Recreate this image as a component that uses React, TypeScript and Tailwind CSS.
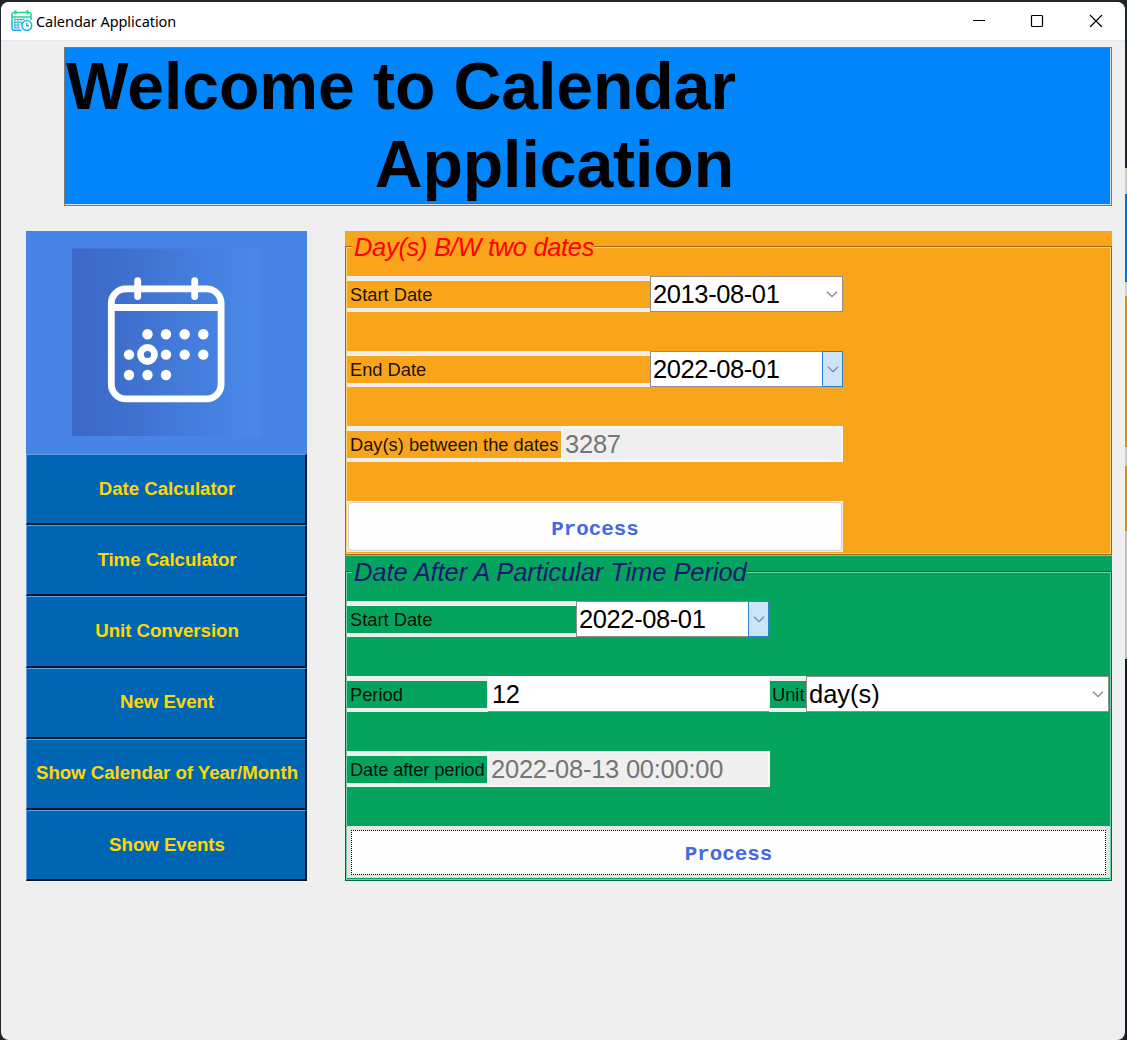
import React from "react";

const ARIAL = "font-['Liberation_Sans',Arial,sans-serif]";

function AppIcon() {
  return (
    <svg width="22" height="22" viewBox="0 0 22 22" fill="none">
      <defs>
        <linearGradient id="appIcon" x1="0" y1="0" x2="0" y2="22" gradientUnits="userSpaceOnUse">
          <stop offset="0" stopColor="#22e08a" />
          <stop offset="1" stopColor="#1f9bff" />
        </linearGradient>
      </defs>
      <g stroke="url(#appIcon)" strokeWidth="1.5">
        <path d="M10.5 20.300H3a2 2 0 0 1-2-2V4a1.500 1.500 0 0 1 1.500-1.500h16A1.500 1.500 0 0 1 20 4v6" />
        <path d="M1 6.900h19" />
        <path d="M4.500 .3v4M16.500 .3v4" strokeWidth="2.200" />
        <path d="M3 9.500h10M3 12.300h7M3 15.100h6M3 17.900h6M4 8.500v9.500M7 8.500v9.500M10 8.500v6M13 8.500v1.500M16 8.500v1" strokeWidth="1" />
        <circle cx="15.800" cy="15.500" r="4.900" />
        <path d="M15.800 12.800v3h2.200" />
      </g>
    </svg>
  );
}

function CalendarPicture() {
  const dots = [
    [121.5, 103], [140, 103], [158.7, 103], [177.3, 103],
    [103, 123.3], [140, 123.3], [158.7, 123.3], [177.3, 123.3],
    [103, 143.7], [121.5, 143.7], [140, 143.7],
  ];
  return (
    <svg width="281" height="222" viewBox="0 0 281 222" className="block">
      <defs>
        <linearGradient id="tile" x1="0" x2="1">
          <stop offset="0" stopColor="#3c68c6" />
          <stop offset="0.35" stopColor="#4072d0" />
          <stop offset="0.75" stopColor="#4681e0" />
          <stop offset="1" stopColor="#4a88e9" />
        </linearGradient>
      </defs>
      <rect x="46" y="17.500" width="187.500" height="187.500" fill="url(#tile)" />
      <g fill="none" stroke="#fff" strokeWidth="6.800">
        <rect x="85.300" y="57.800" width="109.800" height="110" rx="14.500" />
        <path d="M87 76.500h107" />
        <path d="M111.700 49.700v15.800M168.700 49.700v15.800" strokeLinecap="round" />
        <circle cx="121.500" cy="123.500" r="7" />
      </g>
      {dots.map(([x, y]) => (
        <circle key={x + "-" + y} cx={x} cy={y + 0.3} r="5.200" fill="#fff" />
      ))}
    </svg>
  );
}

function Chevron() {
  return (
    <svg width="12" height="8" viewBox="0 0 12 8" fill="none" stroke="#858585" strokeWidth="1.300">
      <path d="M1 1.700l5 5 5-5" />
    </svg>
  );
}

function TitleBar() {
  return (
    <header className="flex h-[39px] items-center border-b border-[#e3e8ee] bg-white pl-[10px]">
      <AppIcon />
      <span className="ml-[3px] font-['Noto_Sans','Open_Sans',sans-serif] text-[14.5px] leading-none tracking-[-0.06px] text-black">
        Calendar Application
      </span>
      <div className="ml-auto flex pr-[22px]">
        <svg width="14" height="14" viewBox="0 0 14 14" className="mr-[44px]" stroke="#000" strokeWidth="1">
          <path d="M1 6.500h12" />
        </svg>
        <svg width="14" height="14" viewBox="0 0 14 14" className="mr-[45px]" fill="none" stroke="#000" strokeWidth="1.200">
          <rect x="1.500" y="1.500" width="11" height="11" rx="1" />
        </svg>
        <svg width="14" height="14" viewBox="0 0 14 14" stroke="#000" strokeWidth="1.200">
          <path d="M1 1l12 12M13 1L1 13" />
        </svg>
      </div>
    </header>
  );
}

function Label({ children, className }: { children: string; className: string }) {
  return (
    <div className={"flex h-[27px] items-center pt-[2px] pl-[3px] text-[18.3px] leading-none whitespace-nowrap text-black/90 " + className}>
      {children}
    </div>
  );
}

function Combo({ value, className, active }: { value: string; className: string; active?: boolean }) {
  return (
    <div className={"flex h-[36px] border border-[#8e8e8e] bg-white " + className}>
      <span className="flex-1 self-center pt-[2px] pl-[2px] text-[25.5px] leading-none text-black">{value}</span>
      <span
        className={
          active
            ? "-my-px -mr-px flex w-[21px] items-center justify-center border border-[#2f80cf] bg-[#cce4f7]"
            : "flex w-[21px] items-center justify-center"
        }
      >
        <Chevron />
      </span>
    </div>
  );
}

function ReadOnly({ value, className }: { value: string; className: string }) {
  return (
    <div className={"flex h-[36px] items-center border-2 border-[#f8f8f8] bg-[#efefef] pt-[2px] pl-[2px] text-[25.5px] leading-none tracking-[-0.24px] text-[#757575] " + className}>
      {value}
    </div>
  );
}

function Row({ children }: { children: React.ReactNode }) {
  return <div className="mb-[39px] flex h-[36px] w-fit items-center bg-[#efefef]">{children}</div>;
}

const PROCESS = "font-['Liberation_Mono',monospace] text-[20.8px] leading-none font-bold text-[#4169e1]";

const LEGEND = "absolute top-[1px] left-[7px] pl-[2px] text-[25.5px] leading-[31px] whitespace-nowrap italic";

const menu = [
  "Date Calculator",
  "Time Calculator",
  "Unit Conversion",
  "New Event",
  "Show Calendar of Year/Month",
  "Show Events",
];

export default function App() {
  return (
    <div className={"flex h-[1040px] w-[1127px] overflow-hidden bg-[#22252d] pt-[2px] pl-px " + ARIAL}>
      <div className="flex w-[1124px] flex-col overflow-hidden rounded-[8px] bg-[#efefef]">
        <TitleBar />

        <div className="mt-[6px] ml-[63px] w-[1048px] border border-[#7a7a7a]">
          <h1 className="h-[157px] border-r border-b border-[#d8dde4] bg-[#0085fa]">
            <div className="w-[669px] pl-px text-right text-[66.2px] leading-[77.5px] font-bold tracking-[-0.1px] whitespace-nowrap text-black">
              Welcome to Calendar
              <br />
              Application
            </div>
          </h1>
        </div>

        <main className="mt-[25px] ml-[25px] flex gap-[38px]">
          <nav className="flex h-[650px] w-[281px] flex-col">
            <div className="h-[223px] w-[281px] bg-[#4884e6]">
              <CalendarPicture />
            </div>
            {menu.map((m) => (
              <button
                key={m}
                className="flex flex-1 items-center justify-center border-t border-r-2 border-b-2 border-l border-t-[#639fe8] border-r-[#00172a] border-b-[#00172a] border-l-[#639fe8] bg-[#0066b4] pl-[2px] text-[18.7px] leading-none font-bold tracking-[-0.05px] whitespace-nowrap text-[#ffd700]"
              >
                {m}
              </button>
            ))}
          </nav>

          <div className="flex w-[767px] flex-col">
            <fieldset className="relative h-[325px] bg-[#f9a51b] pt-[15px]">
              <div className="h-[309px] border border-[#9c6a14]">
                <div className={LEGEND + " bg-[#f9a51b] tracking-[-0.32px] text-[#ff0000]"}>
                  Day(s) B/W two dates
                </div>
                <div className="h-[307px] border border-[#fbd078] pt-[28px]">
                  <Row>
                    <Label className="w-[303px] bg-[#f9a51b]">Start Date</Label>
                    <Combo className="w-[193px] tracking-[-0.4px]" value="2013-08-01" />
                  </Row>
                  <Row>
                    <Label className="w-[303px] bg-[#f9a51b]">End Date</Label>
                    <Combo className="w-[193px] tracking-[-0.4px]" value="2022-08-01" active />
                  </Row>
                  <Row>
                    <Label className="w-[214px] bg-[#f9a51b]">Day(s) between the dates</Label>
                    <ReadOnly className="w-[282px]" value="3287" />
                  </Row>
                  <div className="h-[51px] w-[496px] bg-[#efefef] p-px">
                    <button className={"h-full w-full rounded-[4px] border border-[#d0d0d0] bg-[#fdfdfd] pt-[7px] " + PROCESS}>
                      Process
                    </button>
                  </div>
                </div>
              </div>
            </fieldset>

            <fieldset className="relative h-[325px] bg-[#04a45e] pt-[15px]">
              <div className="h-[310px] border border-[#04693d]">
                <div className={LEGEND + " bg-[#04a45e] tracking-[-0.07px] text-[#191970]"}>
                  Date After A Particular Time Period
                </div>
                <div className="h-[308px] border border-[#6fd0a2] pt-[28px]">
                  <Row>
                    <Label className="w-[229px] bg-[#04a45e]">Start Date</Label>
                    <Combo className="w-[193px] tracking-[-0.4px]" value="2022-08-01" active />
                  </Row>
                  <Row>
                    <Label className="w-[140px] bg-[#04a45e]">Period</Label>
                    <div className="ml-px flex h-[36px] w-[281px] items-center border-b border-[#8e8e8e] bg-white pt-[2px] pl-[4px] text-[25.5px] leading-none tracking-[-0.4px] text-black">
                      12
                    </div>
                    <Label className="ml-px w-[36px] bg-[#04a45e] -indent-[1px]">Unit</Label>
                    <Combo className="w-[303px]" value="day(s)" />
                  </Row>
                  <Row>
                    <Label className="w-[140px] bg-[#04a45e] tracking-[-0.1px]">Date after period</Label>
                    <ReadOnly className="w-[283px]" value="2022-08-13 00:00:00" />
                  </Row>
                  <div className="h-[52px] w-[763px] bg-[#e4e4e4] pt-[4px] pr-[4px] pb-[3px] pl-[4px]">
                    <button className={"h-full w-full border border-dotted border-black bg-[#fdfdfd] pt-[5px] " + PROCESS}>
                      Process
                    </button>
                  </div>
                </div>
              </div>
            </fieldset>
          </div>
        </main>
      </div>

      <div className="flex w-[2px] flex-col">
        <div className="h-[166px] bg-[#22252d]" />
        <div className="h-[26px] bg-[#c9c9c9]" />
        <div className="h-[88px] bg-[#0073d8]" />
        <div className="h-[14px] bg-[#d0d0d0]" />
        <div className="h-[151px] bg-[#d98f17]" />
        <div className="h-[19px] bg-[#c9c9c9]" />
        <div className="h-[65px] bg-[#d98f17]" />
        <div className="h-[128px] bg-[#c0bfba]" />
        <div className="flex-1 bg-[#161a24]" />
      </div>
    </div>
  );
}
